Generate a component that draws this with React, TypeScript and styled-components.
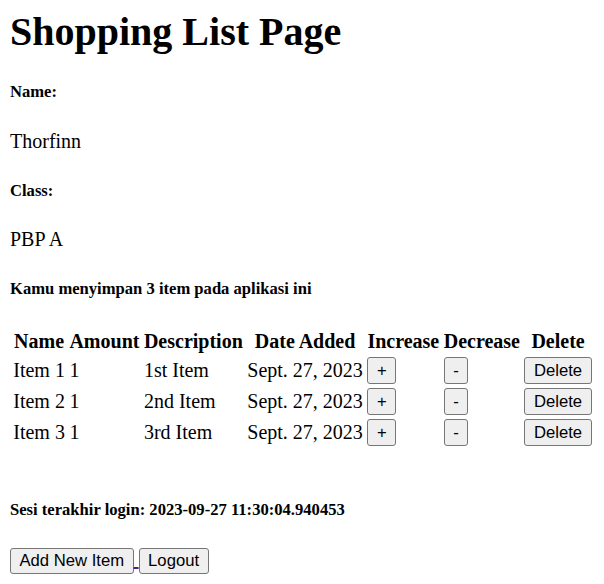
import React from "react";
import styled, { createGlobalStyle } from "styled-components";

const Global = createGlobalStyle`
  html, body { background: #fff; }
  body {
    margin: 0 10px 10px 10px;
    font-family: "Liberation Serif", "Times New Roman", serif;
    font-size: 20px;
    color: #000;
  }
`;

const Page = styled.div`
  display: flow-root;
`;

const Title = styled.h1`
  font-size: 40px;
  font-weight: bold;
  margin: 7.5px 0 26.8px 0;
`;

const Label = styled.h5`
  font-size: 16.6px;
  font-weight: bold;
  margin: 27.7px 0;
`;

const Para = styled.p`
  font-size: 20px;
  margin: 20px 0;
`;

const Table = styled.table`
  border-collapse: separate;
  border-spacing: 2.5px;
  font-size: 20px;
`;

const Th = styled.th`
  font-weight: bold;
  text-align: center;
  padding: 1.25px;
`;

const Td = styled.td`
  padding: 1.25px;
  text-align: left;
  vertical-align: middle;
  white-space: nowrap;
`;

const Button = styled.button`
  font-family: "Liberation Sans", Arial, sans-serif;
  font-size: 16.67px;
  line-height: normal;
  color: #000;
  background: #efefef;
  border: 1px solid #767676;
  border-radius: 3px;
  padding: 2.25px 8.5px;
  margin: 0;
  cursor: pointer;
`;

const Spacer = styled.div`
  height: 23px;
`;

const Actions = styled.div`
  display: block;
`;

const Link = styled.a`
  color: #551a8b;
  text-decoration: underline;
  text-decoration-color: #551a8b;
  text-decoration-thickness: 2px;
`;

const items = [
  { name: "Item 1", amount: 1, desc: "1st Item", date: "Sept. 27, 2023" },
  { name: "Item 2", amount: 1, desc: "2nd Item", date: "Sept. 27, 2023" },
  { name: "Item 3", amount: 1, desc: "3rd Item", date: "Sept. 27, 2023" },
];

export default function App() {
  return (
    <Page>
      <Global />
      <Title>Shopping List Page</Title>
      <Label>Name:</Label>
      <Para>Thorfinn</Para>
      <Label>Class:</Label>
      <Para>PBP A</Para>
      <Label>Kamu menyimpan 3 item pada aplikasi ini</Label>
      <Table>
        <thead>
          <tr>
            <Th>Name</Th>
            <Th>Amount</Th>
            <Th>Description</Th>
            <Th>Date Added</Th>
            <Th>Increase</Th>
            <Th>Decrease</Th>
            <Th>Delete</Th>
          </tr>
        </thead>
        <tbody>
          {items.map((it) => (
            <tr key={it.name}>
              <Td>{it.name}</Td>
              <Td>{it.amount}</Td>
              <Td>{it.desc}</Td>
              <Td>{it.date}</Td>
              <Td>
                <Button>+</Button>
              </Td>
              <Td>
                <Button>-</Button>
              </Td>
              <Td>
                <Button>Delete</Button>
              </Td>
            </tr>
          ))}
        </tbody>
      </Table>
      <Spacer />
      <Label>Sesi terakhir login: 2023-09-27 11:30:04.940453</Label>
      <Actions>
        <Link href="#">
          <Button>Add New Item</Button>{" "}
        </Link>
        <Link href="#">
          <Button>Logout</Button>
        </Link>
      </Actions>
    </Page>
  );
}
